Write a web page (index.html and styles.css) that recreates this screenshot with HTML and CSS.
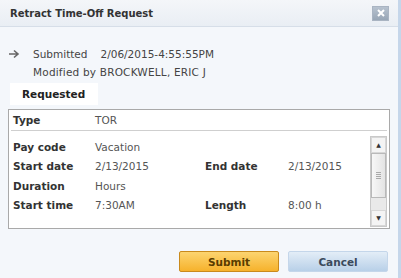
FILE: index.html
```html
<!DOCTYPE html>
<html lang="en">
<head>
    <meta charset="UTF-8">
    <meta name="viewport" content="width=device-width, initial-scale=1.0">
    <title>Retract Time-Off Request</title>
    <link rel="stylesheet" href="styles.css">
</head>
<body>
    <div class="dialog">
        <div class="titlebar">
            <span class="title">Retract Time-Off Request</span>
            <span class="close">
                <svg width="10" height="10" viewBox="0 0 10 10"><path d="M2 2 L8 8 M8 2 L2 8" stroke="#fff" stroke-width="2"/></svg>
            </span>
        </div>
        <div class="body">
            <div class="status">
                <span class="arrow">
                    <svg width="12" height="10" viewBox="0 0 12 10"><path d="M1 5 H10 M6 1.5 L10 5 L6 8.5" stroke="#666" stroke-width="1.6" fill="none"/></svg>
                </span>
                <span>Submitted</span>
                <span class="stamp">2/06/2015-4:55:55PM</span>
            </div>
            <div class="modified">Modified by BROCKWELL, ERIC J</div>

            <div class="tabs">
                <span class="tab">Requested</span>
            </div>

            <div class="panel">
                <div class="row type-row">
                    <span class="label">Type</span>
                    <span class="value">TOR</span>
                </div>
                <div class="details">
                    <div class="grid">
                        <span class="label">Pay code</span>
                        <span class="value">Vacation</span>
                        <span></span><span></span>

                        <span class="label">Start date</span>
                        <span class="value">2/13/2015</span>
                        <span class="label">End date</span>
                        <span class="value">2/13/2015</span>

                        <span class="label">Duration</span>
                        <span class="value">Hours</span>
                        <span></span><span></span>

                        <span class="label">Start time</span>
                        <span class="value">7:30AM</span>
                        <span class="label">Length</span>
                        <span class="value">8:00 h</span>
                    </div>
                    <div class="scrollbar">
                        <span class="sb-btn">&#9650;</span>
                        <span class="sb-track"><span class="sb-thumb"><span class="grip"></span></span></span>
                        <span class="sb-btn">&#9660;</span>
                    </div>
                </div>
            </div>

            <div class="actions">
                <button class="btn btn-submit">Submit</button>
                <button class="btn btn-cancel">Cancel</button>
            </div>
        </div>
    </div>
</body>
</html>
```

FILE: styles.css
```css
body {
    margin: 0;
    font-family: "DejaVu Sans", Verdana, sans-serif;
    font-size: 10.5px;
    color: #444;
    background-color: #f3f6fa;
}
.dialog {
    width: 398px;
    height: 278px;
    border-right: 3px solid #c5d6ea;
    background-color: #f4f7fb;
    display: flex;
    flex-direction: column;
}
.titlebar {
    height: 26px;
    display: flex;
    align-items: center;
    justify-content: space-between;
    padding: 0 10px;
    background: linear-gradient(#f4f6f9, #e9eef4);
    border-bottom: 1px solid #d6dee8;
}
.title {
    font-weight: bold;
    color: #333;
    font-size: 10px;
}
.close {
    width: 15px;
    height: 13px;
    display: flex;
    align-items: center;
    justify-content: center;
    background: linear-gradient(#b7c2cf, #98a6b6);
    border: 1px solid #a9b4c2;
    margin-right: -1px;
}
.body {
    padding: 18px 8px 0 8px;
    flex: 1;
}
.status {
    display: flex;
    align-items: center;
    height: 18px;
}
.arrow {
    width: 25px;
    display: flex;
    align-items: center;
}
.stamp {
    margin-left: 13px;
}
.modified {
    padding-left: 25px;
    height: 18px;
    line-height: 18px;
    letter-spacing: 0.2px;
}
.tabs {
    margin-top: 2px;
    display: flex;
}
.tab {
    display: inline-block;
    background-color: #fff;
    font-weight: bold;
    color: #222;
    margin-left: 2px;
    padding: 5px 13px 5px 12px;
}
.panel {
    margin-top: 4px;
    width: 382px;
    height: 120px;
    border: 1px solid #a9a9a9;
    background-color: #fff;
    box-sizing: border-box;
}
.row {
    display: flex;
    align-items: center;
}
.type-row {
    height: 20px;
    border-bottom: 1px solid #cfcfcf;
    margin: 0 2px;
}
.label {
    font-weight: bold;
    color: #333;
}
.type-row .label {
    width: 82px;
    padding-left: 2px;
}
.value {
    color: #555;
}
.details {
    display: flex;
    justify-content: space-between;
    padding: 5px 2px 2px 4px;
}
.grid {
    display: grid;
    grid-template-columns: 82px 110px 83px 80px;
    grid-auto-rows: 19.5px;
    align-items: center;
    padding-top: 1px;
}
.scrollbar {
    width: 15px;
    height: 89px;
    display: flex;
    flex-direction: column;
    border: 1px solid #c9c9c9;
    background-color: #f0f0f0;
}
.sb-btn {
    height: 14px;
    font-size: 6px;
    color: #333;
    text-align: center;
    line-height: 14px;
    background-color: #f4f4f4;
    border: 1px solid #d7d7d7;
}
.sb-track {
    flex: 1;
    display: flex;
    flex-direction: column;
    padding-bottom: 12px;
    background-color: #e9e9e9;
}
.sb-thumb {
    flex: 1;
    border: 1px solid #b9b9b9;
    background: linear-gradient(to right, #f7f7f7, #e4e4e4);
    display: flex;
    align-items: center;
    justify-content: center;
}
.grip {
    width: 5px;
    height: 7px;
    background: repeating-linear-gradient(#aaa 0 1px, transparent 1px 2px);
}
.actions {
    display: flex;
    justify-content: flex-end;
    gap: 9px;
    margin-top: 22px;
    padding-right: 2px;
}
.btn {
    width: 100px;
    height: 21px;
    font-family: "DejaVu Sans", Verdana, sans-serif;
    font-size: 10.5px;
    font-weight: bold;
    border-radius: 2px;
    cursor: pointer;
}
.btn-submit {
    color: #5a3c00;
    background: linear-gradient(#fcd470, #f6b22c);
    border: 1px solid #c98a1c;
}
.btn-cancel {
    color: #3b4a5c;
    background: linear-gradient(#e3edf7, #b8d0e8);
    border: 1px solid #c4d6ea;
}
```
